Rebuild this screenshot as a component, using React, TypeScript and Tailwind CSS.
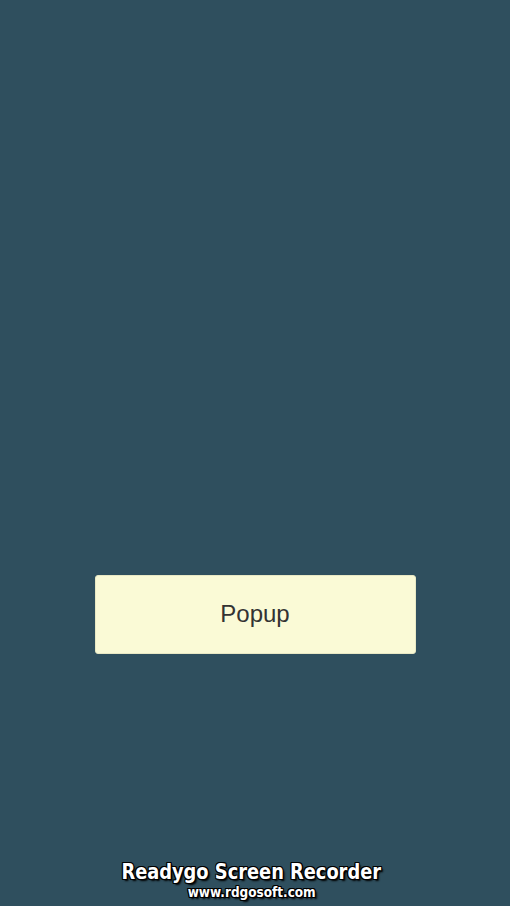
export default function App() {
  const outline =
    "[text-shadow:1px_1px_0_#000,-1px_-1px_0_#000,1px_-1px_0_#000,-1px_1px_0_#000,0_1px_0_#000,0_-1px_0_#000,1px_0_0_#000,-1px_0_0_#000,2px_2px_2px_#000]";

  return (
    <div className="w-[510px] h-[906px] bg-[#2f4f5e] flex flex-col items-center font-['Liberation_Sans',Arial,sans-serif]">
      <div className="h-[575px] shrink-0" />
      <button className="w-[321px] h-[79px] rounded-[3px] bg-[#fafad6] border border-[#e8e8c4] text-[24px] text-[#333333] flex items-center justify-center pb-[1px]">
        Popup
      </button>
      <div className="flex-1" />
      <div className="flex flex-col items-center pb-[7px] pr-[7px] leading-none text-white font-['DejaVu_Sans_Condensed',sans-serif]">
        <p className={`text-[22px] font-bold scale-x-[0.9] whitespace-nowrap ${outline}`}>
          Readygo Screen Recorder
        </p>
        <p className={`mt-[2px] text-[14px] font-bold scale-x-[0.96] whitespace-nowrap ${outline}`}>
          www.rdgosoft.com
        </p>
      </div>
    </div>
  );
}
